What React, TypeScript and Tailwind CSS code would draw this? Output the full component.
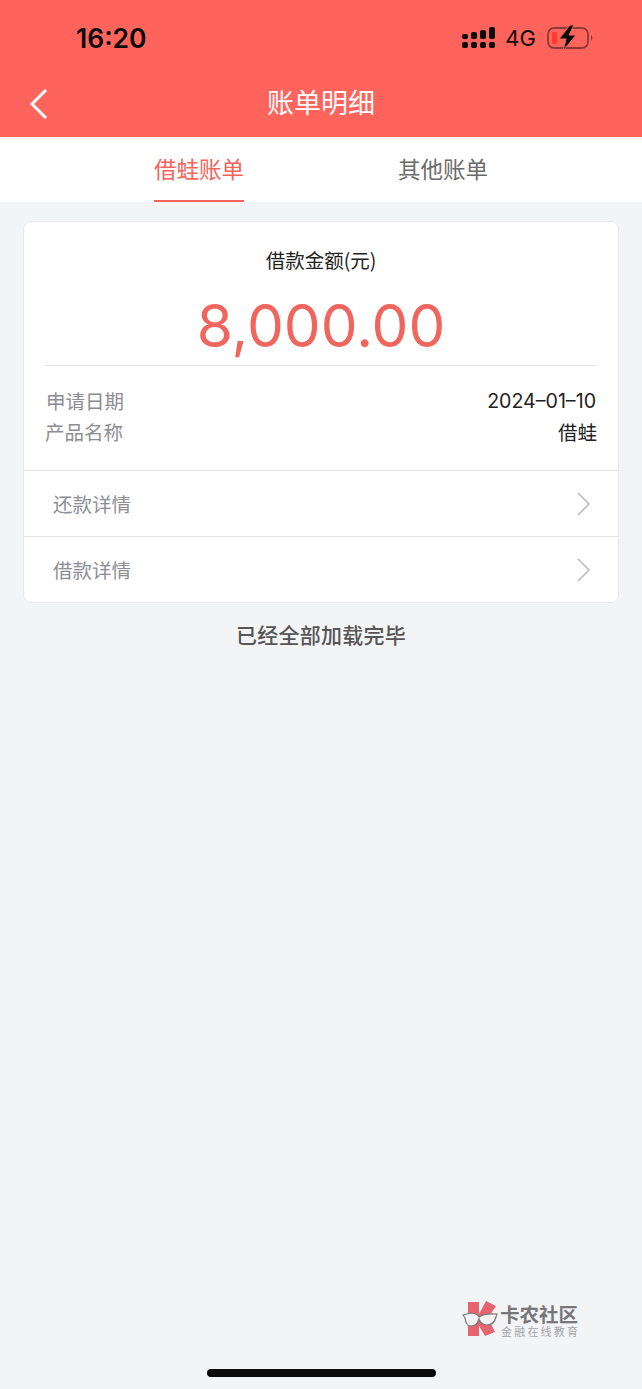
const cjk = { fontFamily: '"Noto Sans CJK SC", "Liberation Sans", sans-serif' };
const latin = { fontFamily: 'Inter, "Noto Sans CJK SC", sans-serif' };

function Signal() {
  const heights = [5, 7, 9, 12];
  return (
    <svg width="34" height="22" viewBox="0 0 34 22" className="block">
      {[0, 1, 2, 3].map((i) => (
        <g key={i} fill="#0a0a0a">
          <rect x={i * 9} y={15} width="6" height="6" rx="2" />
          <rect x={i * 9} y={12 - heights[i]} width="6" height={heights[i]} rx="2" />
        </g>
      ))}
    </svg>
  );
}

function Battery() {
  return (
    <svg width="48" height="26" viewBox="0 0 48 26" className="block">
      <rect x="1" y="3" width="40" height="20" rx="6" fill="none" stroke="#8f3a36" strokeWidth="1.8" />
      <rect x="5" y="7" width="5" height="12" rx="1" fill="#ff3b30" />
      <path d="M44 10 a4 4 0 0 1 0 6 z" fill="#8f3a36" />
      <path d="M23 0 L12 14 H19 L16 26 L29 10 H22 L27 0 Z" fill="#0a0a0a" stroke="#ff6660" strokeWidth="1" />
    </svg>
  );
}

function Chevron() {
  return (
    <svg width="14" height="24" viewBox="0 0 14 24" fill="none" className="block">
      <path d="M1 1 L12 12 L1 23" stroke="#bdbdc2" strokeWidth="1.7" />
    </svg>
  );
}

function Logo() {
  return (
    <div className="flex items-start gap-[2px]">
      <svg width="36" height="36" viewBox="0 0 36 36" className="block">
        <path d="M6 1 H17 V13 L24 0 L34 5 L26 17 L33 31 L23 35 L17 25 V35 H6 Z" fill="#e8646f" />
        <path d="M1 14 L9 12 Q15 12 17 16 Q22 12 35 13 L34 16 Q32 24 25 24 Q19 24 17 18 Q15 25 9 25 Q4 25 3 17 Z" fill="#f3f3f5" stroke="#77777a" strokeWidth="1.2" />
      </svg>
      <div className="flex flex-col items-start pt-[4px]">
        <div className="h-[18px] text-[19.5px] leading-[18px] font-bold text-[#77777a] whitespace-nowrap" style={cjk}>卡农社区</div>
        <div className="h-[12px] mt-[2px] pl-[1px] text-[11px] leading-[12px] text-[#a5a5a8] tracking-[2.2px] whitespace-nowrap" style={cjk}>金融在线教育</div>
      </div>
    </div>
  );
}

export default function App() {
  return (
    <div className="w-[642px] h-[1389px] bg-[#f3f4f6] flex flex-col overflow-hidden relative" style={cjk}>
      <div className="h-[137px] bg-[#ff645c] shrink-0 flex flex-col">
        <div className="h-[74px] pt-[21px] pl-[76px] pr-[47px] flex justify-between items-start">
          <div className="text-[26.5px] leading-[34px] font-semibold text-[#0a0a0a]" style={latin}>16:20</div>
          <div className="flex items-center gap-[10px] pt-[4px]">
            <Signal />
            <span className="text-[22px] leading-[26px] text-[#0a0a0a] ml-[-1px] mr-[1px]" style={latin}>4G</span>
            <Battery />
          </div>
        </div>
        <div className="flex-1 flex items-center relative pb-[8px]">
          <svg width="20" height="32" viewBox="0 0 20 32" fill="none" className="absolute left-[29px] top-[14px]">
            <path d="M17 2 L3 16 L17 30" stroke="#ffffff" strokeWidth="3" />
          </svg>
          <div className="w-full text-center text-[27px] leading-[36px] text-white">账单明细</div>
        </div>
      </div>

      <div className="h-[65px] bg-white shrink-0 flex">
        <div className="w-[398px] flex justify-center">
          <div className="h-[65px] w-[90px] border-b-2 border-[#f4645c] text-[22.5px] leading-[63px] text-[#f4645c] text-center whitespace-nowrap">借蛙账单</div>
        </div>
        <div className="w-[90px] text-[22.5px] leading-[63px] text-[#6b6b6b] text-center whitespace-nowrap">其他账单</div>
      </div>

      <div className="mx-[23px] mt-[19px] bg-white rounded-[8px] border border-[#e9e9ec] flex flex-col">
        <div className="px-[21px]">
          <div className="pt-[25px] text-center text-[19.5px] leading-[26px] text-[#222222]">借款金额(元)</div>
          <div className="mt-[16px] h-[77px] text-center text-[58.5px] leading-[73px] text-[#f0665f] border-b border-[#e5e5e5]" style={latin}>8,000.00</div>
          <div className="pt-[21px] pb-[24px] flex flex-col">
            <div className="flex justify-between text-[19.5px] leading-[28px]">
              <span className="text-[#8b8d94] pl-[1px]">申请日期</span>
              <span className="text-[19.6px] text-[#222222] pr-[1px]" style={latin}>2024–01–10</span>
            </div>
            <div className="flex justify-between text-[19.5px] leading-[28px] mt-[3px]">
              <span className="text-[#8b8d94]">产品名称</span>
              <span className="text-[#222222]">借蛙</span>
            </div>
          </div>
        </div>
        <div className="h-[66px] border-t border-[#e5e5e5] pl-[29px] pr-[27px] flex justify-between items-center">
          <span className="text-[19.5px] text-[#8b8d94]">还款详情</span>
          <Chevron />
        </div>
        <div className="h-[66px] border-t border-[#e5e5e5] pl-[29px] pr-[27px] flex justify-between items-center">
          <span className="text-[19.5px] text-[#8b8d94]">借款详情</span>
          <Chevron />
        </div>
      </div>

      <div className="mt-[17px] text-center text-[21px] leading-[28px] tracking-[0.25px] font-medium text-[#555555]">已经全部加载完毕</div>

      <div className="absolute left-[462px] top-[1301px]"><Logo /></div>
      <div className="absolute left-[207px] top-[1369px] w-[229px] h-[8px] rounded-full bg-[#0a0a0a]" />
    </div>
  );
}
